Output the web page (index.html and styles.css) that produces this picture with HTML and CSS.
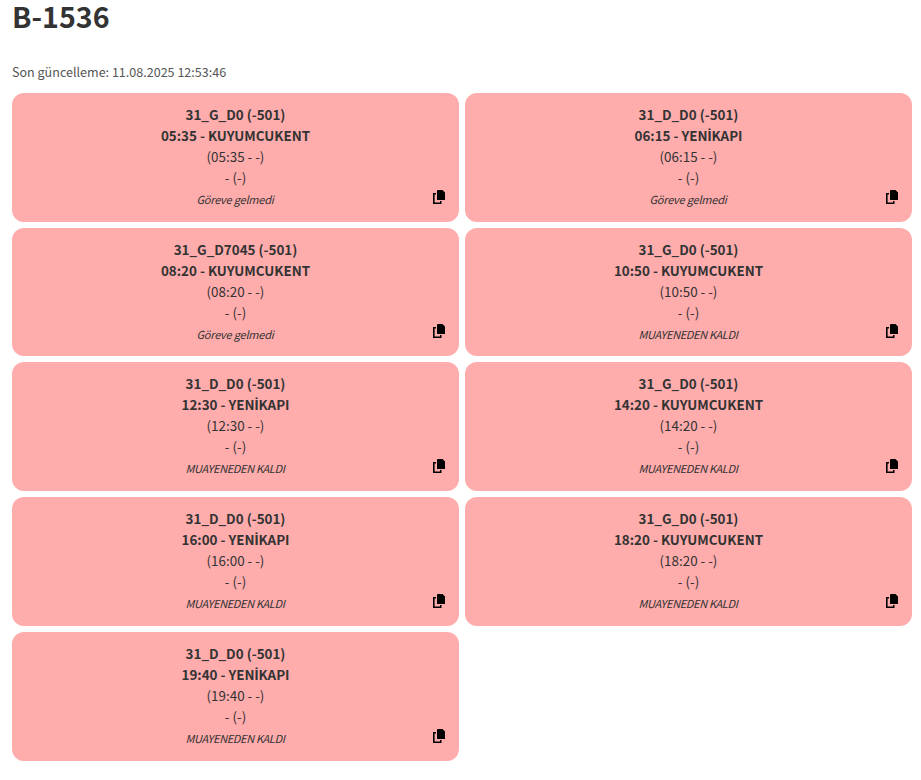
FILE: index.html
```html
<!DOCTYPE html>
<html lang="tr">
<head>
<meta charset="utf-8">
<title>B-1536</title>
<link rel="stylesheet" href="styles.css">
</head>
<body>
<svg class="defs" width="0" height="0"><symbol id="copy" viewBox="0 0 13 14"><path d="M6 0h4.500L13 2.500V10H5V1a1 1 0 0 1 1-1zM1 3h3v1.500H2.600v8H8V11h1.500v3H1z"/></symbol></svg>
<main class="page">
<h1 class="title">B-1536</h1>
<p class="updated">Son güncelleme: 11.08.2025 12:53:46</p>
<section class="grid" id="grid"></section>
</main>
<script src="script.js"></script>
</body>
</html>
```
FILE: styles.css
```css
* { box-sizing: border-box; }
body { margin: 0; background: #fff; color: #333; font-family: "Source Sans Pro", "Noto Sans CJK SC", "Open Sans", sans-serif; }
.defs { position: absolute; }
.page { width: 900px; margin-left: 12px; }
.title { margin: 0; height: 62px; font-size: 28.6px; line-height: 32px; font-weight: 700; }
.updated { margin: 0; height: 31px; font-size: 12.55px; line-height: 20px; color: #555; }
.grid { display: grid; grid-template-columns: 1fr 1fr; gap: 6px; }
.card { position: relative; height: 128.73px; padding-top: 11px; border-radius: 12px; background: #ffacac; text-align: center; font-size: 13.4px; line-height: 21px; white-space: nowrap; }
.card div { height: 21px; }
.card .strong { font-weight: 700; }
.card .dotted { font-family: "Liberation Sans", sans-serif; font-size: 14.5px; line-height: 1; }
.card .note { font-size: 11px; font-style: italic; line-height: 22px; letter-spacing: -0.36px; margin-left: -1px; }
.card .note.mixed { letter-spacing: -0.22px; }
.copy { position: absolute; right: 14px; bottom: 18px; width: 13px; height: 14px; fill: #000; }
```
FILE: script.js
```js
const trips = [
  ["31_G_D0", "05:35", "KUYUMCUKENT", "Göreve gelmedi"],
  ["31_D_D0", "06:15", "YENİKAPI", "Göreve gelmedi"],
  ["31_G_D7045", "08:20", "KUYUMCUKENT", "Göreve gelmedi"],
  ["31_G_D0", "10:50", "KUYUMCUKENT", "MUAYENEDEN KALDI"],
  ["31_D_D0", "12:30", "YENİKAPI", "MUAYENEDEN KALDI"],
  ["31_G_D0", "14:20", "KUYUMCUKENT", "MUAYENEDEN KALDI"],
  ["31_D_D0", "16:00", "YENİKAPI", "MUAYENEDEN KALDI"],
  ["31_G_D0", "18:20", "KUYUMCUKENT", "MUAYENEDEN KALDI"],
  ["31_D_D0", "19:40", "YENİKAPI", "MUAYENEDEN KALDI"]
];
document.getElementById("grid").innerHTML = trips.map(([route, time, stop, note]) => `
<article class="card">
  <div class="strong">${route} (-501)</div>
  <div class="strong">${time} - ${stop.replace("İ", '<span class="dotted">İ</span>')}</div>
  <div>(${time} - -)</div>
  <div>- (-)</div>
  <div class="note${note.startsWith("G") ? " mixed" : ""}">${note}</div>
  <svg class="copy"><use href="#copy"/></svg>
</article>`).join("");
```
